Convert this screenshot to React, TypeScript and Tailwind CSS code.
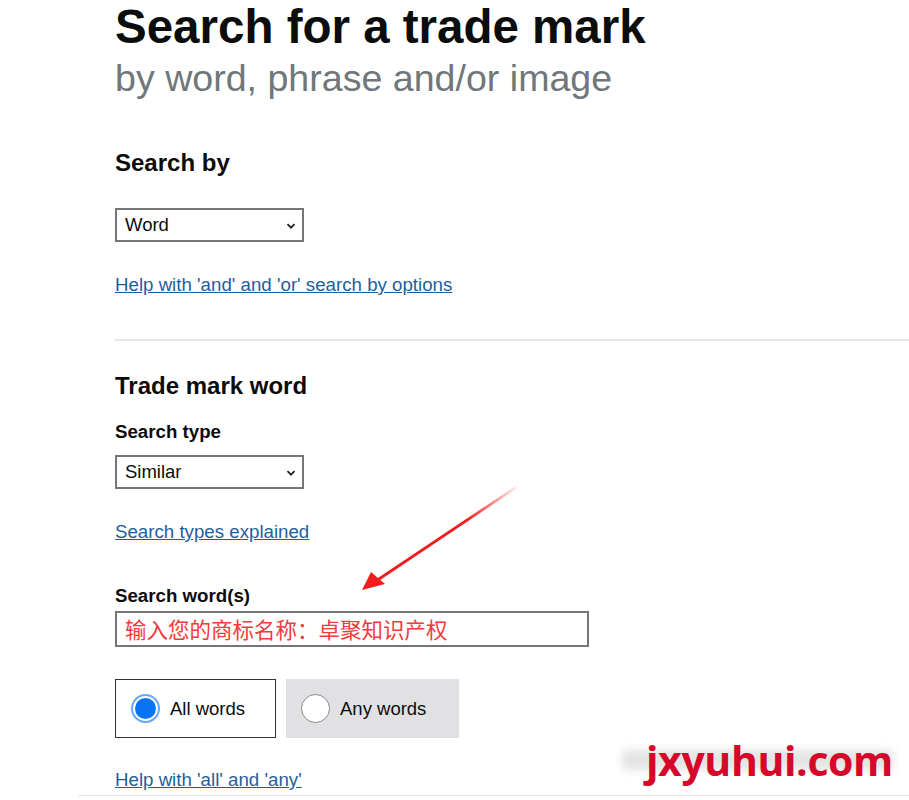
import React from 'react'

const font = { fontFamily: '"Liberation Sans", Arial, sans-serif' }

function FakeSelect({ value }: { value: string }) {
  return (
    <div className="flex h-[34px] w-[189px] items-center justify-between border-2 border-[#767676] bg-white pl-[8px] pr-[6px] text-[18.5px] text-[#0b0c0c]">
      <span>{value}</span>
      <svg width="10" height="10" viewBox="0 0 10 10" className="mt-[1px]">
        <path d="M1.5 3.2 L5 6.7 L8.5 3.2" fill="none" stroke="#222" strokeWidth="1.8" />
      </svg>
    </div>
  )
}

function Radio({ checked }: { checked: boolean }) {
  return checked ? (
    <span className="flex h-[29px] w-[29px] items-center justify-center rounded-full border-2 border-[#6aa7f5] bg-white">
      <span className="h-[21px] w-[21px] rounded-full bg-[#0a74f5]" />
    </span>
  ) : (
    <span className="h-[29px] w-[29px] rounded-full border-[1.5px] border-[#8a8a8a] bg-white" />
  )
}

export default function App() {
  return (
    <div className="relative h-[800px] w-[909px] overflow-hidden bg-white" style={font}>
      <div className="pl-[115px]">
        <h1 className="pt-[1px] text-[47.5px] font-bold leading-[52px] text-[#0b0c0c]">
          Search for a trade mark
        </h1>
        <p className="mt-[3px] text-[37.6px] leading-[44px] text-[#6f777b]">by word, phrase and/or image</p>

        <h2 className="mt-[49px] text-[24px] font-bold leading-[28px] text-[#0b0c0c]">Search by</h2>
        <div className="mt-[31px]">
          <FakeSelect value="Word" />
        </div>
        <a href="#" className="mt-[31px] block text-[18.7px] leading-[24px] text-[#1d5f9e] underline">
          Help with 'and' and 'or' search by options
        </a>

        <div className="mt-[42px] h-[2px] bg-[#e6e6e6]" />

        <h2 className="mt-[31px] text-[24px] font-bold leading-[28px] text-[#0b0c0c]">Trade mark word</h2>
        <h3 className="mt-[20px] text-[18.7px] font-bold leading-[24px] text-[#0b0c0c]">Search type</h3>
        <div className="mt-[11px]">
          <FakeSelect value="Similar" />
        </div>
        <a href="#" className="mt-[31px] block text-[18.7px] leading-[24px] text-[#1d5f9e] underline">
          Search types explained
        </a>

        <h3 className="mt-[40px] text-[18.7px] font-bold leading-[24px] text-[#0b0c0c]">Search word(s)</h3>
        <div
          className="mt-[3px] flex h-[36px] w-[474px] items-center border-2 border-[#767676] pl-[8px] text-[21.5px] text-[#f23b3b]"
          style={{ fontFamily: '"Noto Sans CJK SC", "Liberation Sans", sans-serif' }}
        >
          输入您的商标名称：卓聚知识产权
        </div>

        <div className="mt-[32px] flex gap-[10px]">
          <div className="flex h-[59px] w-[161px] items-center gap-[10px] border border-[#333] pl-[15px] text-[18.5px] text-[#0b0c0c]">
            <Radio checked />
            <span>All words</span>
          </div>
          <div className="flex h-[59px] w-[173px] items-center gap-[10px] bg-[#e1e1e3] pl-[15px] text-[18.5px] text-[#0b0c0c]">
            <Radio checked={false} />
            <span>Any words</span>
          </div>
        </div>

        <a href="#" className="mt-[30px] block text-[18.7px] leading-[24px] text-[#1d5f9e] underline">
          Help with 'all' and 'any'
        </a>
      </div>
      <div className="ml-[78px] mt-[3px] h-px bg-[#e8e8e8]" />

      {/* annotation arrow */}
      <svg className="absolute left-[355px] top-[484px]" width="170" height="112" viewBox="0 0 170 112">
        <defs>
          <linearGradient id="fade" x1="1" y1="0" x2="0" y2="1">
            <stop offset="0" stopColor="#ff3b3b" stopOpacity="0.15" />
            <stop offset="0.35" stopColor="#f21d1d" />
            <stop offset="1" stopColor="#f21d1d" />
          </linearGradient>
        </defs>
        <path d="M160 4 L24 95" stroke="url(#fade)" strokeWidth="2.8" strokeLinecap="round" />
        <path d="M7 106 L16 88 L30 100 Z" fill="#f21d1d" />
      </svg>

      {/* watermark */}
      <div className="absolute left-[622px] top-[738px] flex items-center">
        <div className="absolute left-0 right-0 top-[12px] h-[20px] bg-[#e4e4e4] blur-[4px]" />
        <span className="relative ml-[24px] text-[41px] font-bold leading-[44px] tracking-[-0.4px] text-[#d6082a]" style={{ fontFamily: '"Open Sans", "Liberation Sans", sans-serif' }}>
          jxyuhui.com
        </span>
      </div>
    </div>
  )
}
